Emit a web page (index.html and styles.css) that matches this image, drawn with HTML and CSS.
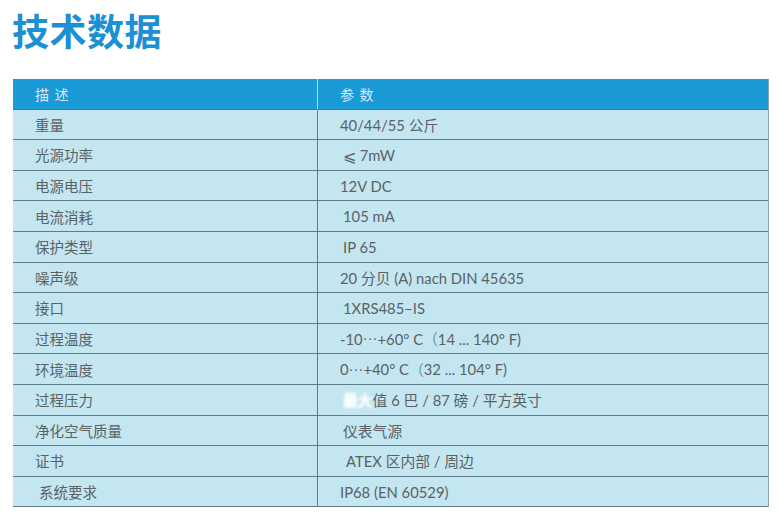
FILE: index.html
```html
<!DOCTYPE html>
<html lang="zh">
<head>
<meta charset="utf-8">
<link rel="stylesheet" href="styles.css">
</head>
<body>
<h1 class="title">技术数据</h1>
<div class="spec">
  <div class="cell head">描 述</div>
  <div class="cell head value">参 数</div>

  <div class="cell">重量</div>
  <div class="cell value">40/44/55 公斤</div>

  <div class="cell">光源功率</div>
  <div class="cell value ind"><span class="cjk le">⩽</span>&nbsp;7mW</div>

  <div class="cell">电源电压</div>
  <div class="cell value">12V DC</div>

  <div class="cell">电流消耗</div>
  <div class="cell value ind">105 mA</div>

  <div class="cell">保护类型</div>
  <div class="cell value ind">IP 65</div>

  <div class="cell">噪声级</div>
  <div class="cell value">20 分贝 (A) nach DIN 45635</div>

  <div class="cell">接口</div>
  <div class="cell value ind">1XRS485–IS</div>

  <div class="cell">过程温度</div>
  <div class="cell value">-10<span class="cjk">⋯</span>+60° C<span class="cjk">（</span>14 ... 140° F)</div>

  <div class="cell">环境温度</div>
  <div class="cell value">0<span class="cjk">⋯</span>+40° C<span class="cjk">（</span>32 ... 104° F)</div>

  <div class="cell">过程压力</div>
  <div class="cell value ind"><span class="blot">最大</span>值 6 巴 / 87 磅 / 平方英寸</div>

  <div class="cell">净化空气质量</div>
  <div class="cell value ind">仪表气源</div>

  <div class="cell">证书</div>
  <div class="cell value ind2">ATEX 区内部 / 周边</div>

  <div class="cell ind">系统要求</div>
  <div class="cell value">IP68 (EN 60529)</div>
</div>
</body>
</html>
```

FILE: styles.css
```css
html, body {
  margin: 0;
  padding: 0;
  background: #ffffff;
}

body {
  font-family: Lato, "Noto Sans CJK SC", sans-serif;
  width: 780px;
  height: 522px;
  overflow: hidden;
}

.title {
  margin: 0;
  padding: 8px 0 0 12px;
  font-family: "Noto Sans CJK SC", sans-serif;
  font-size: 37px;
  line-height: 44px;
  font-weight: 700;
  color: #1c90d3;
  letter-spacing: 0.5px;
}

.spec {
  margin: 27px 0 0 13px;
  width: 756px;
  display: grid;
  grid-template-columns: 304px 1fr;
  grid-auto-rows: 30.6px;
  border-right: 1px solid #8fa3ab;
  box-sizing: border-box;
}

.cell {
  box-sizing: border-box;
  background: #c4e6f0;
  border-bottom: 1px solid #5f7c89;
  color: #5a6266;
  font-size: 14.5px;
  display: flex;
  align-items: center;
  padding-left: 22px;
  white-space: pre;
}

.value {
  border-left: 1px solid #5f7c89;
  padding-left: 22px;
  font-size: 14.8px;
}

.ind {
  padding-left: 26px;
}

.value.ind {
  padding-left: 25px;
}

.value.ind2 {
  padding-left: 28px;
}

.cjk {
  font-family: "Noto Sans CJK SC", sans-serif;
  font-weight: 300;
}

.le {
  font-size: 16px;
}

.cell.head {
  height: 31px;
  background: #1b9ad8;
  color: rgba(255, 255, 255, 0.82);
  letter-spacing: 1px;
  font-size: 14px;
  border-bottom: 1px solid #3a7fa3;
}

.cell.head.value {
  border-left: 1px solid #a9dcf3;
}

.blot {
  color: #ffffff;
  text-shadow: 0 0 2px #ffffff, 0 0 3px #ffffff;
  filter: blur(1px);
}
```
